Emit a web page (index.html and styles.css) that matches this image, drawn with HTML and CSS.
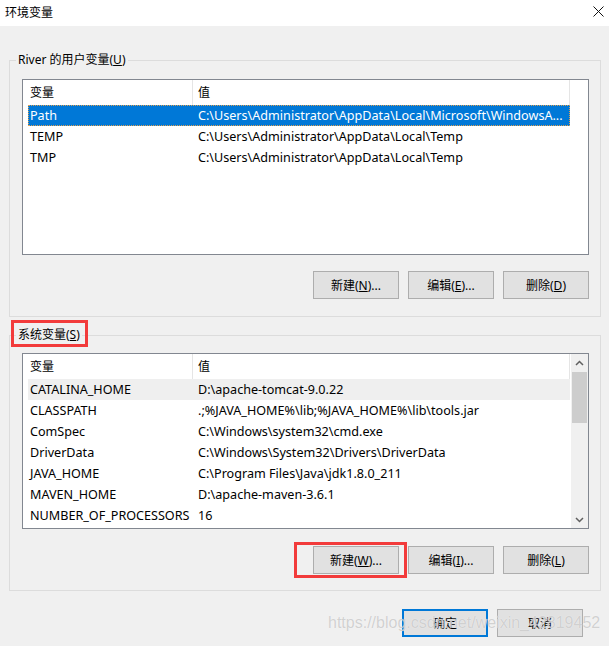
FILE: index.html
```html
<!DOCTYPE html>
<html lang="zh-CN">
<head>
    <meta charset="UTF-8">
    <title>环境变量</title>
    <link rel="stylesheet" href="styles.css">
</head>
<body>
    <div class="window">
        <div class="titlebar">
            <span class="title">环境变量</span>
            <svg class="close" width="11" height="11" viewBox="0 0 11 11">
                <path d="M0.5 0.5 L10.5 10.5 M10.5 0.5 L0.5 10.5" stroke="#111" stroke-width="1" fill="none"/>
            </svg>
        </div>

        <div class="content">
            <fieldset class="group group-user">
                <legend>River 的用户变量(<u>U</u>)</legend>
                <div class="listview">
                    <div class="lv-main">
                        <div class="lv-head">
                            <div class="hcol hname">变量</div>
                            <div class="hcol hvalue">值</div>
                        </div>
                        <div class="row selected">
                            <div class="cell name">Path</div>
                            <div class="cell value">C:\Users\Administrator\AppData\Local\Microsoft\WindowsA...</div>
                        </div>
                        <div class="row">
                            <div class="cell name">TEMP</div>
                            <div class="cell value">C:\Users\Administrator\AppData\Local\Temp</div>
                        </div>
                        <div class="row">
                            <div class="cell name">TMP</div>
                            <div class="cell value">C:\Users\Administrator\AppData\Local\Temp</div>
                        </div>
                    </div>
                </div>
                <div class="btn-row">
                    <button class="btn">新建(<u>N</u>)...</button>
                    <button class="btn">编辑(<u>E</u>)...</button>
                    <button class="btn">删除(<u>D</u>)</button>
                </div>
            </fieldset>

            <fieldset class="group group-system">
                <legend><span class="marked">系统变量(<u>S</u>)</span></legend>
                <div class="listview">
                    <div class="lv-main">
                        <div class="lv-head">
                            <div class="hcol hname">变量</div>
                            <div class="hcol hvalue">值</div>
                        </div>
                        <div class="row hover">
                            <div class="cell name">CATALINA_HOME</div>
                            <div class="cell value">D:\apache-tomcat-9.0.22</div>
                        </div>
                        <div class="row">
                            <div class="cell name">CLASSPATH</div>
                            <div class="cell value">.;%JAVA_HOME%\lib;%JAVA_HOME%\lib\tools.jar</div>
                        </div>
                        <div class="row">
                            <div class="cell name">ComSpec</div>
                            <div class="cell value">C:\Windows\system32\cmd.exe</div>
                        </div>
                        <div class="row">
                            <div class="cell name">DriverData</div>
                            <div class="cell value">C:\Windows\System32\Drivers\DriverData</div>
                        </div>
                        <div class="row">
                            <div class="cell name">JAVA_HOME</div>
                            <div class="cell value">C:\Program Files\Java\jdk1.8.0_211</div>
                        </div>
                        <div class="row">
                            <div class="cell name">MAVEN_HOME</div>
                            <div class="cell value">D:\apache-maven-3.6.1</div>
                        </div>
                        <div class="row">
                            <div class="cell name">NUMBER_OF_PROCESSORS</div>
                            <div class="cell value">16</div>
                        </div>
                    </div>
                    <div class="scrollbar">
                        <div class="sb-arrow">
                            <svg width="9" height="6" viewBox="0 0 9 6"><path d="M1 5 L4.5 1.5 L8 5" stroke="#606060" stroke-width="1.5" fill="none"/></svg>
                        </div>
                        <div class="sb-track">
                            <div class="sb-thumb"></div>
                        </div>
                        <div class="sb-arrow">
                            <svg width="9" height="6" viewBox="0 0 9 6"><path d="M1 1 L4.5 4.5 L8 1" stroke="#606060" stroke-width="1.5" fill="none"/></svg>
                        </div>
                    </div>
                </div>
                <div class="btn-row">
                    <button class="btn marked-btn">新建(<u>W</u>)...</button>
                    <button class="btn">编辑(<u>I</u>)...</button>
                    <button class="btn">删除(<u>L</u>)</button>
                </div>
            </fieldset>

            <div class="dialog-buttons">
                <button class="btn default">确定</button>
                <button class="btn">取消</button>
            </div>
        </div>

        <div class="watermark">https://blog.csdn.net/weixin_42819452</div>
    </div>
</body>
</html>
```

FILE: styles.css
```css
body {
    margin: 0;
    padding: 0;
    background-color: #f0f0f0;
    font-family: "Noto Sans", "Noto Sans CJK SC", sans-serif;
    font-size: 12px;
    color: #000;
}
.window {
    position: relative;
    width: 609px;
    height: 646px;
    overflow: hidden;
}
.titlebar {
    height: 26px;
    background: #fff;
    display: flex;
    align-items: center;
    justify-content: space-between;
    padding: 0 5px 0 5px;
    box-sizing: border-box;
}
.title {
    line-height: 24px;
    margin-top: -1px;
}
.close {
    margin-top: -4px;
}
.content {
    padding: 0 8px 0 9px;
}
.group {
    margin: 0;
    border: 1px solid #dcdcdc;
    padding: 9px 11px 17px 12px;
    min-width: 0;
}
.group legend {
    line-height: 20px;
    padding: 0 2px;
    margin-left: -6px;
}
.group-user {
    margin-top: 24px;
}
.group-system {
    margin-top: 8px;
    padding-top: 8px;
    padding-bottom: 16px;
}
.marked {
    position: relative;
}
.marked::after {
    content: "";
    position: absolute;
    left: -7px;
    right: -8px;
    top: -6px;
    bottom: -4px;
    border: 3px solid #f23b3b;
}
.listview {
    height: 176px;
    box-sizing: border-box;
    border: 1px solid #828790;
    background: #fff;
    display: flex;
}
.lv-main {
    flex: 1;
}
.lv-head {
    display: flex;
    height: 25px;
    width: 547px;
}
.hcol {
    line-height: 25px;
    border-right: 1px solid #e5e5e5;
    box-sizing: border-box;
}
.hname {
    width: 170px;
    padding-left: 7px;
}
.hvalue {
    width: 377px;
    padding-left: 5px;
}
.row {
    display: flex;
    height: 21px;
    line-height: 21px;
    margin-left: 5px;
    width: 542px;
    box-sizing: border-box;
    white-space: nowrap;
    font-size: 12.6px;
}
.cell.name {
    width: 164px;
    padding-left: 2px;
    box-sizing: border-box;
}
.cell.value {
    padding-left: 6px;
}
.row.selected {
    background: #0078d7;
    color: #fff;
    outline: 1px dotted #e0a050;
    outline-offset: -1px;
}
.row.hover {
    background: #efefef;
}
.scrollbar {
    width: 17px;
    background: #f0f0f0;
    display: flex;
    flex-direction: column;
}
.sb-arrow {
    height: 17px;
    display: flex;
    align-items: center;
    justify-content: center;
}
.sb-track {
    flex: 1;
    padding-top: 1px;
}
.sb-thumb {
    height: 51px;
    margin: 0 1px;
    background: #cdcdcd;
}
.btn-row {
    display: flex;
    justify-content: flex-end;
    gap: 9px;
    margin-top: 16px;
}
.group-system .btn-row {
    margin-top: 17px;
}
.btn {
    width: 86px;
    height: 28px;
    padding: 0;
    background: #e1e1e1;
    border: 1px solid #adadad;
    font-family: inherit;
    font-size: 12px;
    color: #000;
}
.btn.default {
    border: 2px solid #0078d7;
}
.marked-btn {
    position: relative;
}
.marked-btn::after {
    content: "";
    position: absolute;
    left: -20px;
    right: -9px;
    top: -5px;
    bottom: -5px;
    border: 3px solid #f23b3b;
}
.dialog-buttons {
    display: flex;
    justify-content: flex-end;
    gap: 9px;
    margin-top: 18px;
    padding-right: 18px;
}
.watermark {
    position: absolute;
    left: 328px;
    top: 614px;
    font-family: "Liberation Sans", Arial, sans-serif;
    font-size: 16px;
    color: rgba(190, 190, 190, 0.7);
    text-shadow: 0 0 1px rgba(255, 255, 255, 0.9);
    white-space: nowrap;
}
```
